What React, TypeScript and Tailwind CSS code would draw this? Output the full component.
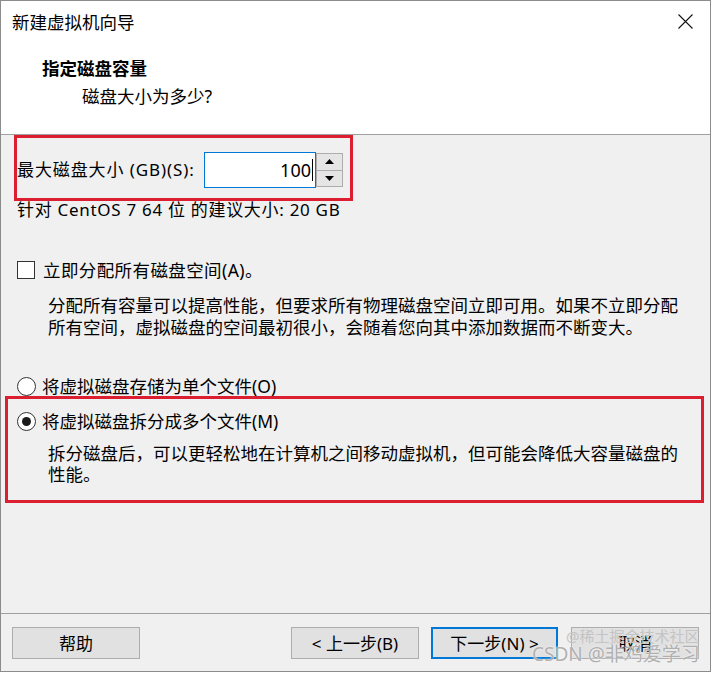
import React from "react"

const font = { fontFamily: '"Noto Sans", "Noto Sans CJK SC", sans-serif' }

const Btn = ({ label, primary = false, w = "w-[128px]" }: { label: string; primary?: boolean; w?: string }) => (
  <div
    className={`${w} h-[32px] flex items-center justify-center bg-[#e1e1e1] text-[17px] leading-none text-black ${
      primary ? "border-2 border-[#0078d7]" : "border border-[#adadad]"
    }`}
  >
    {label}
  </div>
)

const Radio = ({ checked = false }: { checked?: boolean }) => (
  <div className="w-[19px] h-[19px] rounded-full border border-[#333] bg-white flex items-center justify-center shrink-0">
    {checked && <div className="w-[9px] h-[9px] rounded-full bg-[#1a1a1a]" />}
  </div>
)

export default function App() {
  return (
    <div
      style={font}
      className="relative w-[711px] h-[672px] border border-[#8c8c8c] bg-[#f0f0f0] flex flex-col text-black overflow-hidden"
    >
      {/* header */}
      <div className="h-[134px] bg-white border-b border-[#a0a0a0] flex flex-col shrink-0">
        <div className="flex items-center justify-between pl-[11px] pr-[17px] pt-[11px]">
          <span className="text-[17.5px] leading-[20px]">新建虚拟机向导</span>
          <svg width="15" height="15" viewBox="0 0 15 15" className="mt-[-1px]">
            <path d="M0.5 0.5 L14.5 14.5 M14.5 0.5 L0.5 14.5" stroke="#111" strokeWidth="1.1" fill="none" />
          </svg>
        </div>
        <div className="pl-[41px] mt-[26px] text-[17.5px] leading-[20px] font-bold">指定磁盘容量</div>
        <div className="pl-[81px] mt-[8px] text-[17.5px] leading-[20px]">磁盘大小为多少?</div>
      </div>

      {/* body */}
      <div className="flex flex-col text-[17.5px]">
        <div className="ml-[13px] w-[339px] h-[66px] border-[3px] border-[#dc1f30] flex items-start pt-[14px]">
          <span className="w-[187px] mt-[8px] leading-[20px] text-[17px] tracking-[0.9px] whitespace-nowrap">
            最大磁盘大小 (GB)(S):
          </span>
          <div className="flex">
            <div className="w-[112px] h-[36px] bg-white border border-[#0078d7] flex items-center justify-end pr-[2px]">
              <span className="text-[18px] leading-none">100</span>
              <span className="w-px h-[22px] bg-black ml-px" />
            </div>
            <div className="w-[27px] h-[34px] mt-px flex flex-col border border-[#adadad] bg-[#e5e5e5]">
              <div className="flex-1 flex items-center justify-center border-b border-[#adadad]">
                <svg width="9" height="5" viewBox="0 0 9 5">
                  <path d="M4.5 0 L9 5 L0 5 Z" fill="#000" />
                </svg>
              </div>
              <div className="flex-1 flex items-center justify-center">
                <svg width="9" height="5" viewBox="0 0 9 5">
                  <path d="M0 0 L9 0 L4.5 5 Z" fill="#000" />
                </svg>
              </div>
            </div>
          </div>
        </div>

        <div className="pl-[16px] mt-[-1px] leading-[20px] text-[17px] tracking-[0.7px]">
          针对 CentOS 7 64 位 的建议大小: 20 GB
        </div>

        <div className="pl-[16px] mt-[39px] h-[22px] flex items-center">
          <div className="w-[18px] h-[18px] border border-[#333] bg-white shrink-0" />
          <span className="ml-[8px] leading-[22px] tracking-[0.4px]">立即分配所有磁盘空间(A)。</span>
        </div>
        <div className="pl-[47px] mt-[13px] leading-[22px] pr-[12px]">
          分配所有容量可以提高性能，但要求所有物理磁盘空间立即可用。如果不立即分配
          <br />
          所有空间，虚拟磁盘的空间最初很小，会随着您向其中添加数据而不断变大。
        </div>

        <div className="pl-[16px] mt-[37px] h-[22px] flex items-center">
          <Radio />
          <span className="ml-[6px] leading-[22px]">将虚拟磁盘存储为单个文件(O)</span>
        </div>

        <div className="ml-[4px] mt-[-1px] w-[699px] h-[107px] border-[3px] border-[#dc1f30] flex flex-col pt-[11px]">
          <div className="pl-[9px] h-[22px] flex items-center">
            <Radio checked />
            <span className="ml-[6px] leading-[22px]">将虚拟磁盘拆分成多个文件(M)</span>
          </div>
          <div className="pl-[40px] mt-[11px] leading-[21px]">
            拆分磁盘后，可以更轻松地在计算机之间移动虚拟机，但可能会降低大容量磁盘的
            <br />
            性能。
          </div>
        </div>
      </div>

      {/* footer */}
      <div className="mt-auto h-[58px] border-t border-[#a0a0a0] flex items-start pt-[13px] pl-[11px] pr-[11px]">
        <Btn label="帮助" />
        <div className="ml-auto flex gap-[12px]">
          <Btn label="< 上一步(B)" />
          <Btn label="下一步(N) >" w="w-[127px]" primary />
          <div className="ml-px">
            <Btn label="取消" />
          </div>
        </div>
      </div>

      {/* watermark */}
      <div className="absolute left-[565px] top-[628px] text-[15px] leading-none text-[#c4c4c4] pointer-events-none whitespace-nowrap">
        @稀土掘金技术社区
      </div>
      <div className="absolute left-[531px] top-[644px] text-[19px] leading-none text-[#b0b0b0] pointer-events-none whitespace-nowrap [text-shadow:0_0_2px_#fff]">
        CSDN @非鸡爱学习
      </div>
    </div>
  )
}
